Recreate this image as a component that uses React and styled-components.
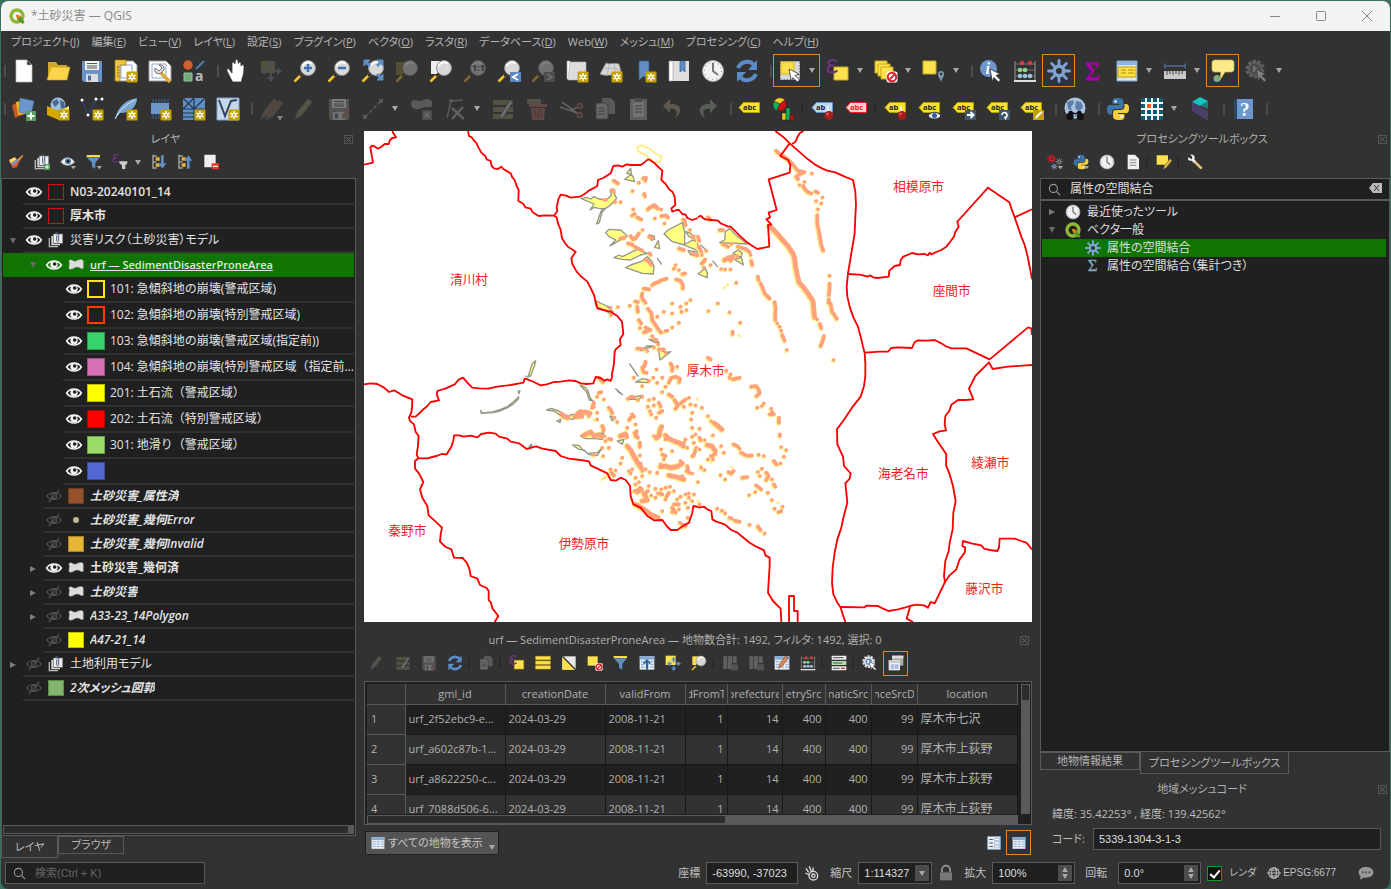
import React from "react";
import styled, { createGlobalStyle, css } from "styled-components";

const GlobalStyle = createGlobalStyle`
  * {
    box-sizing: border-box;
  }
  body {
    margin: 0;
    background: #3a6f62;
    color: #bdbdbd;
    font-family: "Open Sans", "Noto Sans CJK JP", sans-serif;
    font-size: 12px;
    line-height: 16px;
    font-feature-settings: "palt";
  }
  button, input, select {
    font: inherit;
    color: inherit;
    font-feature-settings: inherit;
  }
`;

/* ---------- icons ---------- */

const Star = () => (
  <g>
    <rect x="12.5" y="12.5" width="11" height="11" rx="1" fill="#c4a000" />
    <path d="M18 14v8M14.5 16l7 4M21.500 16l-7 4" stroke="#fff" strokeWidth="1.5" />
    <circle cx="18" cy="18" r="1" fill="#c4a000" />
  </g>
);
const Tag = ({ fill = "#f7e32c", line = "#b59d00", ink = "#222", word = "abc" }) => (
  <g>
    <path d="M1 10.500L5.500 5.500H21.500V15.500H5.500Z" fill={fill} stroke={line} />
    <text x="5" y="13" fontSize="7.500" fontWeight="700" fill={ink} fontFamily="Open Sans, sans-serif">
      {word}
    </text>
  </g>
);
const Glass = ({ sign }) => (
  <g>
    <path d="M1.500 22.500L9 15" stroke="#f4c430" strokeWidth="2.500" />
    <path d="M7 17l3-3" stroke="#222" strokeWidth="2" />
    <circle cx="15" cy="9" r="7.500" fill="#d9d9d9" stroke="#8d8d8d" />
    <path d="M9.500 7a6 6 0 0 1 9-2.500" stroke="#fff" strokeWidth="2" fill="none" />
    {sign ? <path d={sign} stroke="#3f71b0" strokeWidth="2.500" /> : null}
  </g>
);
const Cursor = () => (
  <path d="M11 10l10 5-4 1.500 4.500 4.500-2 2-4.500-4.500-1.500 4z" fill="#fff" stroke="#333" strokeWidth=".8" />
);
const Clock = () => (
  <g>
    <circle cx="12" cy="12" r="10.500" fill="#f2f2f2" stroke="#aaa" />
    <circle cx="12" cy="12" r="8.500" fill="none" stroke="#5b8cc0" strokeDasharray="1 3.450" />
    <path d="M12 4v8l5 4" stroke="#777" strokeWidth="2" fill="none" />
  </g>
);
const Pin = () => (
  <g>
    <path d="M17 9v8" stroke="#eee" strokeWidth="2" />
    <circle cx="18" cy="18.500" r="4.500" fill="#a51d1d" />
    <circle cx="16.500" cy="17" r="1.200" fill="#d66" />
  </g>
);
const Blocked = () => (
  <g>
    <rect x="12.500" y="12.500" width="11" height="11" rx="2" fill="#fff" />
    <circle cx="18" cy="18" r="4.200" fill="none" stroke="#d9262b" strokeWidth="2" />
    <path d="M15 21l6-6" stroke="#d9262b" strokeWidth="2" />
  </g>
);
const Epsilon = ({ color = "#6d3580" }) => (
  <path d="M11 2.500C8 0 1.500 1 2.500 4.500c.5 2 3 2 5.500 2-3 0-6.500.5-6.500 3.700 0 4 6.500 4.300 10 1.300" fill="none" stroke={color} strokeWidth="2" />
);
const Refresh = () => (
  <g fill="none" stroke="#5b8cc8" strokeWidth="4">
    <path d="M3 9c3-7 12-8 16-3" />
    <path d="M21 15c-3 7-12 8-16 3" />
    <path d="M22 1v10H13z" fill="#5b8cc8" stroke="none" />
    <path d="M2 23V13h9z" fill="#5b8cc8" stroke="none" />
  </g>
);
const Gear = ({ color = "#7da3d8", hole = "#323232" }) => (
  <g>
    <path
      d="M12 1.500v21M1.500 12h21M4.600 4.600l14.800 14.800M19.400 4.600L4.600 19.400"
      stroke={color}
      strokeWidth="2.800"
      strokeLinecap="round"
    />
    <circle cx="12" cy="12" r="6.500" fill={color} />
    <circle cx="12" cy="12" r="3" fill={hole} />
  </g>
);
const Python = () => (
  <g>
    <path d="M12 1c-5 0-5.500 1.500-5.500 4v2H13v1H4C1.500 8 1 10 1 13s1 4.500 3 4.500h2V15c0-2 1.500-3 3.500-3h5c2 0 3-1 3-3V5c0-3-2-4-5.500-4z" fill="#3d74a8" />
    <path d="M13 23c5 0 5.500-1.500 5.500-4v-2H12v-1h8c2.500 0 3-2 3-5s-1-4-3-4h-1.500v2.500c0 2-1.500 3.500-3.500 3.500h-5c-2 0-3 1-3 3V19c0 3 2 4 6 4z" fill="#f7cf3e" />
    <circle cx="9.500" cy="4.500" r="1.200" fill="#fff" />
    <circle cx="15.500" cy="19.500" r="1.200" fill="#fff" />
  </g>
);
const Qgis = () => (
  <g>
    <circle cx="12" cy="12" r="9" fill="none" stroke="#8cb838" strokeWidth="5" />
    <path d="M11 10l6 2 6.500 9.500-3 2.500L12 17z" fill="#5f9628" />
    <path d="M10 10l5.500 1L17 13l-2.500 3.500-2.500-1.500z" fill="#ee7913" />
  </g>
);
const Pencil = ({ color = "#8b8b75" }) => (
  <path d="M2 22l3-8L15 2l4 3L9 18z" fill={color} stroke="#666" />
);
const Magic = () => (
  <g>
    <path d="M2 3h20v5H2zM2 10h20v5H2zM2 17h20v5H2z" fill="#8c875f" />
    <path d="M8 20L19 3l3 2-10 16z" fill="#ccc" stroke="#444" strokeWidth=".8" />
  </g>
);
const Floppy = ({ body = "#6b93c7" }) => (
  <g>
    <path d="M2 2h20v21H4l-2-2z" fill={body} />
    <path d="M5 2h14v9H5z" fill="#f3f3f3" />
    <path d="M7 4.500h10M7 7h10M7 9h10" stroke="#555" />
    <path d="M6 15h12v8H6z" fill="#ddd" />
    <path d="M8 16.500h3v5H8z" fill="#4b6ea0" />
  </g>
);
const Calc = () => (
  <g>
    <path d="M2 2v20M22 2v20" stroke="#777" strokeWidth="1.500" />
    <path d="M2 5h20M2 11h20M2 17h20" stroke="#777" />
    <path d="M1 22h22" stroke="#ddd" strokeWidth="2" />
    <g fill="#d43c3c"><circle cx="9" cy="4" r="2.300" /><circle cx="17" cy="4" r="2.300" /></g>
    <g fill="#8ed08e"><circle cx="7" cy="11" r="2.300" /><circle cx="12" cy="11" r="2.300" /></g>
    <g fill="#9fc2dc"><circle cx="7" cy="17" r="2.300" /><circle cx="12" cy="17" r="2.300" /><circle cx="17" cy="17" r="2.300" /></g>
  </g>
);
const Globe = () => (
  <g>
    <circle cx="12" cy="11" r="10.500" fill="#a9c4e0" />
    <path d="M4 5l6-2 1 3-3 4 1 4-4-2zM13 4l5 1 2 5-4 5-4-4zM9 15l5 1-1 4z" fill="#5f7fa8" />
  </g>
);
const Funnel = () => (
  <g>
    <path d="M1 5h20l-7 8v9l-5-3v-6z" fill="#5f8ec5" />
    <path d="M1 3h20" stroke="#f6df3a" strokeWidth="3" />
  </g>
);
const Sheet = () => (
  <g>
    <path d="M1 2h22v20H1z" fill="#e7edf4" />
    <path d="M1 2h22v5H1z" fill="#86add6" />
    <path d="M3 10h5M10 10h5M17 10h5M3 14h5M10 14h5M17 14h5M3 18h5M10 18h5M17 18h5" stroke="#87a6c8" strokeWidth="1.500" />
  </g>
);
const Corner = () => <path d="M16 18h8l-4 5z" fill="#a8a8a8" />;

const drawings = {
  qgis: <Qgis />,
  newFile: <path d="M4 1h11l5 5v17H4zM15 1v5h5" fill="#fff" stroke="#bbb" strokeWidth=".7" />,
  open: (
    <g>
      <path d="M2 3h8l2 3h9v15H2z" fill="#d3a92a" />
      <path d="M5 8h19l-3 13H1z" fill="#fbd44c" stroke="#c79b1c" strokeWidth=".6" />
    </g>
  ),
  save: <Floppy />,
  layoutNew: (
    <g>
      <path d="M2 2h17l4 4v16H2z" fill="#fff" stroke="#999" />
      <path d="M7 6h11v13H7z" fill="none" stroke="#8ba6d8" />
      <path d="M1 1h11v5H6v16H1z" fill="#f0c63f" stroke="#9b7a12" strokeWidth=".7" />
      <path d="M3 8h2M3 11h2M3 14h2M3 17h2" stroke="#7b5f0b" />
      <Star />
    </g>
  ),
  layouts: (
    <g>
      <path d="M1 2h17l5 5v15H1z" fill="#fff" stroke="#999" />
      <path d="M4 5h14v14H4z" fill="none" stroke="#8ba6d8" />
      <path d="M13 14l9 9" stroke="#d9ab3c" strokeWidth="3.500" />
      <path d="M7 9a4 4 0 0 0 6 5l3-3a4 4 0 0 0-5-5l3 3-3 3z" fill="#ddd" stroke="#555" strokeWidth=".8" />
    </g>
  ),
  style: (
    <g>
      <circle cx="6" cy="6" r="4.700" fill="#d2602f" />
      <path d="M14 10l8-8" stroke="#4f7db8" strokeWidth="2" />
      <path d="M2 14h8v8H2z" fill="#74a877" stroke="#95c498" />
      <text x="13" y="22" fontSize="14" fontWeight="700" fill="#bbb" fontFamily="Open Sans, sans-serif">a</text>
    </g>
  ),
  hand: (
    <path
      d="M7 22l-4-8c-2-4-1-5 1-4l3 4V5c0-2.500 2.500-2.500 2.800 0l.5-3c.5-2 2.500-2 2.700 0l.3 2.500c.7-2 2.700-2 2.700.5v2c.8-1.800 2.900-1.500 3 .5 0 5-.5 9-2 12l-.5 3.500H8z"
      fill="#fff"
      stroke="#333"
      strokeWidth=".8"
    />
  ),
  panSel: (
    <g fill="#6d7f96">
      <path d="M2 2h14v12H2z" fill="#8c8456" />
      <path d="M12 1l4 5H8zM12 23l4-5H8zM1 12l5-4v8zM23 12l-5-4v8z" />
      <path d="M12 6v4M12 14v4M6 12h4M14 12h4" stroke="#6d7f96" strokeWidth="2" />
    </g>
  ),
  zoomIn: <Glass sign="M15 5v8M11 9h8" />,
  zoomOut: <Glass sign="M11 9h8" />,
  zoomFull: (
    <g>
      <Glass />
      <path d="M3 1h6L3 7zM22 1v6l-6-6zM22 21v-6l-6 6z" fill="#5f8ec5" stroke="#5f8ec5" />
      <path d="M4 2l5 5M21 2l-5 5M21 20l-5-5" stroke="#5f8ec5" strokeWidth="3" />
    </g>
  ),
  zoomSel: (
    <g>
      <path d="M1 3h12v13H1z" fill="#8b7d3c" />
      <Glass />
    </g>
  ),
  zoomLayer: (
    <g>
      <path d="M2 2h12v13H2z" fill="#eee" />
      <Glass />
    </g>
  ),
  zoomNative: (
    <g>
      <Glass />
      <text x="9" y="12" fontSize="9" fontWeight="700" fill="#333" fontFamily="Open Sans, sans-serif">1:1</text>
    </g>
  ),
  zoomLast: (
    <g>
      <Glass />
      <path d="M13 13h11v10H13z" fill="#5b8cc8" />
      <path d="M21 15l-5 3 5 3" stroke="#fff" strokeWidth="2" fill="none" />
    </g>
  ),
  zoomNext: (
    <g>
      <Glass />
      <path d="M13 13h11v10H13z" fill="#777" />
      <path d="M16 15l5 3-5 3" stroke="#ccc" strokeWidth="2" fill="none" />
    </g>
  ),
  mapNew: (
    <g>
      <path d="M2 2h3v18H2z" fill="#fff" stroke="#aaa" strokeWidth=".6" />
      <path d="M5 3h16v18H3z" fill="#dcdcdc" stroke="#bbb" strokeWidth=".6" />
      <Star />
    </g>
  ),
  map3d: (
    <g>
      <path d="M7 4c5 2 8-1 13 1l3 11c-6-3-14 3-22-1z" fill="#d5d5d5" stroke="#888" strokeWidth=".7" />
      <path d="M4 9c6 2 11-1 17 2M10 5L8 17M15 5l2 12" stroke="#aaa" strokeWidth=".7" fill="none" />
      <Star />
    </g>
  ),
  bookmarkNew: (
    <g>
      <path d="M6 2h10v19l-5-4-5 4z" fill="#5f8ec5" stroke="#35608f" strokeWidth=".7" />
      <Star />
    </g>
  ),
  bookmarks: (
    <g>
      <path d="M2 2h20v20H2z" fill="#dedede" />
      <path d="M2 2h4v20H2z" fill="#fff" stroke="#999" strokeWidth=".6" />
      <path d="M13 2h5v11l-2.500-2-2.500 2z" fill="#5f8ec5" stroke="#35608f" strokeWidth=".7" />
    </g>
  ),
  clock: <Clock />,
  refresh: <Refresh />,
  select: (
    <g>
      <path d="M2 2h20v19H2z" fill="#d8d8d8" stroke="#222" strokeDasharray="1.500 1.500" />
      <path d="M3 3h13v12H3z" fill="#fbe04a" stroke="#d5b31b" />
      <Cursor />
    </g>
  ),
  selectExpr: (
    <g>
      <path d="M8 8h14v13H8z" fill="#fce24d" stroke="#c9a91d" />
      <Epsilon />
    </g>
  ),
  deselect: (
    <g fill="#fce24d" stroke="#c9a91d">
      <path d="M1 2h12v12H1z" />
      <path d="M4 5h12v12H4z" />
      <path d="M7 8h12v12H7z" />
      <g stroke="none"><Blocked /></g>
    </g>
  ),
  selectLoc: (
    <g>
      <path d="M1 2h13v13H1z" fill="#fce24d" stroke="#c9a91d" />
      <path d="M19 23c-1-4-3-5-3-8a3 3 0 0 1 6 0c0 3-2 4-3 8z" fill="#7898b0" />
      <circle cx="19" cy="15" r="1.300" fill="#333" />
    </g>
  ),
  identify: (
    <g>
      <circle cx="9.500" cy="9.500" r="8.500" fill="#6d97cc" />
      <text x="6.500" y="15" fontSize="16" fontStyle="italic" fontWeight="700" fill="#fff" fontFamily="Liberation Serif, serif">i</text>
      <Cursor />
    </g>
  ),
  calc: <Calc />,
  gear: <Gear />,
  sigma: <text x="4" y="21" fontSize="26" fill="#a800a8" stroke="#a800a8" strokeWidth=".8" fontFamily="Liberation Serif, serif">Σ</text>,
  smallSigma: <text x="4" y="20" fontSize="25" fill="#86a7bd" stroke="#86a7bd" strokeWidth=".5" fontFamily="Liberation Serif, serif">Σ</text>,
  attrTable: (
    <g>
      <path d="M2 2h20v20H2z" fill="#dbe6f1" stroke="#7ba3cf" />
      <path d="M2 2h20v4H2z" fill="#8db3dc" />
      <path d="M3 8h18v10H3z" fill="#fbe04a" stroke="#c9a000" />
      <path d="M6 11h5M13 11h6M6 14h5M13 14h6" stroke="#b28f00" />
    </g>
  ),
  measure: (
    <g>
      <path d="M2 7h20M2 4.500v5M22 4.500v5" stroke="#4d6d8f" strokeWidth="1.500" />
      <path d="M1 12h22v8H1z" fill="#c9c9c9" />
      <path d="M4 12v4M7 12v3M10 12v4M13 12v3M16 12v4M19 12v3" stroke="#444" />
    </g>
  ),
  tips: (
    <g>
      <path d="M4 1h16c2 0 3 1 3 3v6c0 2-1 3-3 3h-6l-5 8 1-8H4c-2 0-3-1-3-3V4c0-2 1-3 3-3z" fill="#fbe98a" stroke="#d8bb3a" strokeWidth=".7" />
      <circle cx="6" cy="19.500" r="3.500" fill="#7fae7c" />
    </g>
  ),
  action: (
    <g>
      <circle cx="10" cy="10" r="8" fill="none" stroke="#aaa" strokeWidth="3" strokeDasharray="3.300 1.700" />
      <circle cx="10" cy="10" r="6.500" fill="#777" stroke="#aaa" strokeWidth="1.500" />
      <path d="M8 6.500l5.500 3.500L8 13.500z" fill="#ddd" />
      <Cursor />
    </g>
  ),

  addLayer: (
    <g>
      <path d="M0 8l9-4 3 13-9 4z" fill="#c35a1e" />
      <path d="M4 5l9-2 1 14-8 1z" fill="#f0b71c" />
      <path d="M8 1l14 3-3 14-12-3z" fill="#6b97cd" stroke="#47719f" strokeWidth=".6" />
      <path d="M14 14h10v10H14z" fill="#5b9c63" />
      <path d="M19 15.500v7M15.500 19h7" stroke="#fff" strokeWidth="2" />
    </g>
  ),
  geopackage: (
    <g>
      <circle cx="12" cy="8" r="7.500" fill="#9dbfe0" />
      <path d="M6 5l5-3 2 4-4 4zM14 3l4 2 1 6-4 1z" fill="#47688f" />
      <path d="M1 9l12 5v9L1 18z" fill="#d5a900" />
      <path d="M13 14l10-5v9l-10 5z" fill="#fbe96b" />
      <Star />
    </g>
  ),
  shape: (
    <g>
      <path d="M2 3l6 15L16 3l6-1" fill="none" stroke="#2d4460" strokeWidth="1.500" />
      <g fill="#fff"><circle cx="2" cy="3" r="1.500" /><circle cx="8" cy="18" r="1.500" /><circle cx="16" cy="2" r="1.500" /><circle cx="22" cy="2" r="1.500" /></g>
      <Star />
    </g>
  ),
  spatialite: (
    <g>
      <path d="M1 22C4 9 12 3 23 1c0 8-6 15-17 15" fill="#79a5d4" />
      <path d="M1 22C6 12 14 6 21 3" stroke="#dbe8f5" fill="none" />
      <Star />
    </g>
  ),
  memory: (
    <g>
      <path d="M5 2v20M8 2v20M11 2v20M14 2v20M17 2v20M20 2v20" stroke="#3f6490" />
      <path d="M3 6h18v11H3z" fill="#6b97cd" />
      <Star />
    </g>
  ),
  mesh: (
    <g>
      <path d="M1 1h22v22H1z" fill="#5f8ec5" />
      <path d="M12 1v22M1 12h22M1 1l11 11M12 1L1 12M12 12L23 1M1 16h11M1 20h11" stroke="#1f3550" strokeWidth="1.200" />
      <Star />
    </g>
  ),
  virtual: (
    <g>
      <path d="M1 1h22v22H1z" fill="#c7d8ea" stroke="#7fa4cd" />
      <path d="M3 3l6 16L15 4l6-1" fill="none" stroke="#2d4460" strokeWidth="2" />
      <Star />
    </g>
  ),
  pencils: (
    <g>
      <Pencil color="#8a6a5c" />
      <g transform="translate(5 1)"><Pencil color="#8a6a5c" /></g>
      <path d="M18 19h6l-3 5z" fill="#fff" />
    </g>
  ),
  pencil: <Pencil />,
  saveEdits: (
    <g>
      <Floppy body="#8a8a8a" />
      <path d="M14 20l6-9 3 2-6 9z" fill="#a08070" />
    </g>
  ),
  line: (
    <g>
      <path d="M4 20L20 4" stroke="#999" strokeWidth="1.500" strokeDasharray="4 2" />
      <path d="M2 18h4v4H2zM18 2h4v4h-4z" fill="#999" />
    </g>
  ),
  polygonAdd: (
    <g>
      <path d="M2 5c4-5 7 1 12-2 6-3 11 1 9 6-2 3-7 0-10 2-5 3-12 1-11-6z" fill="#999" />
      <path d="M13 13h10v10H13z" fill="#777" />
      <path d="M18 14v8M14 18h8M15 15l6 6M21 15l-6 6" stroke="#ccc" />
    </g>
  ),
  vertex: (
    <g>
      <path d="M4 21L8 4l12-1" fill="none" stroke="#999" strokeWidth="1.500" />
      <circle cx="8" cy="4" r="2" fill="#999" />
      <path d="M9 11l12 11M20 10L9 22" stroke="#aaa" strokeWidth="2.500" />
    </g>
  ),
  magic: <Magic />,
  trash: (
    <g>
      <path d="M2 2h14v5H2z" fill="#8c875f" />
      <path d="M4 7h18v3H4zM6 11h14l-1 12H7z" fill="#b06a64" />
      <path d="M10 12v9M13 12v9M16 12v9" stroke="#444" />
    </g>
  ),
  cut: (
    <g fill="none" stroke="#aaa" strokeWidth="1.800">
      <path d="M1 10l17 6M3 5l14 10M11 13l8-3" />
      <circle cx="20.500" cy="18" r="2.300" stroke="#a66" />
      <circle cx="21" cy="9" r="2.300" stroke="#a66" />
    </g>
  ),
  copy: (
    <g>
      <path d="M9 1h9l4 4v12H9z" fill="#999" />
      <path d="M3 6h9l3 3v13H3z" fill="#c4c4c4" stroke="#555" />
      <path d="M5 11h7M5 14h7M5 17h7" stroke="#555" />
    </g>
  ),
  paste: (
    <g>
      <path d="M3 2h17v21H3z" fill="#aaa" />
      <path d="M6 5h11v15H6z" fill="#ddd" />
      <path d="M8 1h7v4H8z" fill="#777" />
      <path d="M8 9h7M8 12h7M8 15h7" stroke="#555" />
    </g>
  ),
  undo: <path d="M9 2L2 9l7 7v-4c7-1 8 3 5 9 8-5 7-15-5-14z" fill="#a9917a" />,
  redo: <path d="M15 2l7 7-7 7v-4c-7-1-8 3-5 9-8-5-7-15 5-14z" fill="#93a392" />,
  label: <Tag />,
  labelRed: <Tag fill="#ffd0d0" line="#f02020" ink="#f02020" />,
  labelPinBlue: <g><Tag fill="#bcd9f5" line="#5f95d0" word="ab" /><Pin /></g>,
  labelPin: <g><Tag word="ab" /><Pin /></g>,
  labelEye: (
    <g>
      <Tag />
      <path d="M10 19c3-5 10-5 13 0-3 4-10 4-13 0z" fill="#eee" stroke="#333" />
      <circle cx="16.500" cy="18.500" r="2.500" fill="#2b5f9e" />
    </g>
  ),
  labelMove: (
    <g><Tag /><path d="M13 13h11v10H13z" fill="#40586c" /><path d="M15 18h6M18.500 15l3 3-3 3" stroke="#fff" strokeWidth="2" fill="none" /></g>
  ),
  labelRotate: (
    <g><Tag /><path d="M13 13h11v10H13z" fill="#40586c" /><path d="M16 18a2.500 2.500 0 1 1 3 2.500l1 2" stroke="#fff" strokeWidth="1.500" fill="none" /></g>
  ),
  labelEdit: (
    <g><Tag /><path d="M13 13h11v10H13z" fill="#c4a000" /><path d="M15 22l1-3 5-5 1.500 1.500-5 5z" fill="#fff" /></g>
  ),
  chart: (
    <g stroke="#222" strokeWidth=".5">
      <path d="M8 7L5 14A7 7 0 0 1 2 4z" fill="#0fb05a" />
      <path d="M8 7L2 4a7 7 0 0 1 11-1z" fill="#f5d020" />
      <path d="M8 7l5-4c3 4 1 10-5 11l-3-1z" fill="#d01010" />
      <path d="M10 16h4v7h-4z" fill="#f5c518" />
      <path d="M14 11h4v12h-4z" fill="#10b060" />
      <path d="M18 18h4v5h-4z" fill="#c01010" />
    </g>
  ),
  metasearch: (
    <g>
      <Globe />
      <path d="M6 14h3l2 2h2l2-2h3l1 3H5z" fill="#111" />
      <circle cx="7" cy="19.500" r="3.700" fill="#111" />
      <circle cx="17.500" cy="19.500" r="3.700" fill="#111" />
    </g>
  ),
  python: <Python />,
  grid: (
    <g>
      <path d="M1 1h22v22H1z" fill="#0b5c74" />
      <path d="M6 1v22M12 1v22M18 1v22M1 6h22M1 12h22M1 18h22" stroke="#fff" strokeWidth="2" />
      <path d="M7 7h4v4H7z" fill="#ff5a1f" />
    </g>
  ),
  cube: (
    <g>
      <path d="M4 5l8-5 8 4-8 5z" fill="#16c5c0" />
      <path d="M4 5l16 9v10L4 14z" fill="#4c3e66" />
      <path d="M4 5l8 4 8-5v8z" fill="#12a09d" opacity=".7" />
    </g>
  ),
  help: (
    <g>
      <path d="M3 2h19v20H3z" fill="#6b97cd" />
      <path d="M3 2h3v20H3z" fill="#2c4666" />
      <text x="9" y="19" fontSize="19" fontWeight="700" fill="#fff" fontFamily="Liberation Serif, serif">?</text>
    </g>
  ),

  brush: (
    <g>
      <path d="M13 9L22 1l1 2-7 9z" fill="#d9903c" />
      <path d="M1 9l9-4 7 7-4 8-6 1z" fill="#d55b3c" />
      <path d="M2 9l8-4 3 3-9 6z" fill="#f5df5a" />
      <path d="M5 14l8-6 2 3-8 6z" fill="#6c9bd2" />
    </g>
  ),
  group: (
    <g>
      <path d="M1 9h2v12h12v2H1z" fill="#bbb" />
      <path d="M5 6h3v12h10v2H5z" fill="#ddd" />
      <path d="M8 3h14v14H8z" fill="#eee" stroke="#777" />
      <path d="M13 5v8c0 2 3 2 3 0V3c0-3-5-3-5 0" stroke="#45607d" fill="none" strokeWidth="1.500" />
    </g>
  ),
  groupAdd: (
    <g>
      <path d="M1 9h2v12h12v2H1z" fill="#bbb" />
      <path d="M5 6h3v12h10v2H5z" fill="#ddd" />
      <path d="M8 3h14v14H8z" fill="#eee" stroke="#777" />
      <path d="M13 5v8c0 2 3 2 3 0V3c0-3-5-3-5 0" stroke="#45607d" fill="none" strokeWidth="1.500" />
      <path d="M15 15h9v9h-9z" fill="#5b9c63" />
      <path d="M19.500 16.500v6M16.500 19.500h6" stroke="#fff" strokeWidth="1.500" />
    </g>
  ),
  eyeMenu: (
    <g>
      <path d="M1 12C6 3 17 3 22 12c-5 7-16 7-21 0z" fill="#eee" stroke="#777" />
      <circle cx="12" cy="11" r="4.500" fill="#5884b5" />
      <circle cx="12" cy="11" r="2" fill="#111" />
      <Corner />
    </g>
  ),
  funnel: <Funnel />,
  funnelMenu: <g><Funnel /><Corner /></g>,
  exprFilter: (
    <g>
      <g transform="scale(.9)"><Epsilon color="#6d3580" /></g>
      <path d="M11 11h12v3l-3 3v6l-5-1v-5l-4-3z" fill="#ccc" />
    </g>
  ),
  expand: (
    <g>
      <path d="M3 1v21M3 3h6M3 12h5M3 21h6" stroke="#ccc" fill="none" strokeWidth="1.500" />
      <path d="M7 5h6v5H7zM7 14h6v5H7z" fill="#e5b33a" />
      <path d="M17 2v14" stroke="#5f8ec5" strokeWidth="4" />
      <path d="M11 14h12l-6 8z" fill="#5f8ec5" />
    </g>
  ),
  collapse: (
    <g>
      <path d="M3 1v21M3 3h6M3 12h5M3 21h6" stroke="#ccc" fill="none" strokeWidth="1.500" />
      <path d="M7 5h6v5H7zM7 14h6v5H7z" fill="#e5b33a" />
      <path d="M17 22V8" stroke="#5f8ec5" strokeWidth="4" />
      <path d="M11 10h12l-6-8z" fill="#5f8ec5" />
    </g>
  ),
  remove: (
    <g>
      <path d="M2 1h17v19H2z" fill="#eee" />
      <path d="M13 14h11v9H13z" fill="#e33" />
      <path d="M15 18.500h7" stroke="#fff" strokeWidth="2" />
    </g>
  ),
  gears: (
    <g>
      <g transform="scale(.58)"><Gear color="#d21f2b" hole="#611" /></g>
      <g transform="translate(13 6) scale(.45)"><Gear color="#888" /></g>
      <g transform="translate(6 14) scale(.4)"><Gear color="#7da3d8" /></g>
      <Corner />
    </g>
  ),
  pythonMenu: <g><Python /><Corner /></g>,
  doc: (
    <g>
      <path d="M4 1h11l6 6v16H4z" fill="#f0f0f0" />
      <path d="M7 9h10M7 13h10M7 17h10" stroke="#888" strokeWidth="1.500" />
    </g>
  ),
  note: (
    <g>
      <path d="M1 2h17v14H1z" fill="#fce24d" />
      <path d="M11 23l2-6L21 7l3 3-9 11z" fill="#e0b93c" stroke="#555" strokeWidth=".7" />
    </g>
  ),
  wrench: (
    <g>
      <path d="M11 11l11 11" stroke="#e8c878" strokeWidth="4" />
      <path d="M2 5l5 3 1-4-3-3c5-1 8 3 6 7l2 3-3 2-3-3c-4 1-7-2-5-5z" fill="#eee" />
    </g>
  ),
  conditional: (
    <g>
      <path d="M2 2h20v20H2z" fill="#e8e8e8" />
      <path d="M2 2v20h20z" fill="#fce24d" />
      <path d="M2 2l20 20" stroke="#333" strokeWidth="2" />
    </g>
  ),
  selectAll: <path d="M1 2h22v5H1zM1 9h22v5H1zM1 16h22v5H1z" fill="#fce24d" stroke="#d0ae1a" />,
  selectNone: (
    <g>
      <path d="M1 2h15v14H1z" fill="#fce24d" />
      <Blocked />
    </g>
  ),
  moveTop: (
    <g>
      <Sheet />
      <path d="M12 22V10M7 13l5-5 5 5" stroke="#2d64a8" strokeWidth="3" fill="none" />
    </g>
  ),
  panMap: (
    <g>
      <path d="M1 1h15v14H1z" fill="#fce24d" />
      <path d="M13 6v5M13 16v5M6 13h4M16 13h5" stroke="#5f8ec5" strokeWidth="2.500" />
      <path d="M13 3l4 5H9zM13 24l4-5H9zM3 13l5-4v8zM24 13l-5-4v8z" fill="#5f8ec5" />
    </g>
  ),
  zoomMap: (
    <g>
      <path d="M2 2h12v13H2z" fill="#fce24d" />
      <Glass />
    </g>
  ),
  fieldAdd: (
    <g>
      <path d="M2 2h6v19H2zM9 2h6v19H9zM16 2h6v10h-6z" fill="#aaa" />
      <path d="M14 14h10v9H14z" fill="#888" />
    </g>
  ),
  editTable: (
    <g>
      <Sheet />
      <path d="M7 20l2-7L17 2l4 2-8 12z" fill="#e08a4a" stroke="#843" />
    </g>
  ),
  formView: (
    <g>
      <path d="M1 1h22v6H1zM1 17h22v6H1z" fill="#eee" />
      <path d="M1 9h22v6H1z" fill="#b9d8b6" />
      <path d="M3 12h14" stroke="#3b8f4a" strokeWidth="2" />
      <path d="M3 4h16M3 20h10" stroke="#555" strokeWidth="1.500" />
      <path d="M15 19h6v2h-6z" fill="#d33" />
    </g>
  ),
  actionBlue: (
    <g>
      <circle cx="10" cy="10" r="8" fill="none" stroke="#e4e4e4" strokeWidth="3" strokeDasharray="3.300 1.700" />
      <circle cx="10" cy="10" r="6" fill="#5b8cc8" stroke="#e4e4e4" strokeWidth="2.500" />
      <path d="M8 7l5 3-5 3z" fill="#fff" />
      <Cursor />
    </g>
  ),
  dock: (
    <g>
      <path d="M6 1h17v15H6z" fill="#aaa" />
      <path d="M6 1h17v4H6z" fill="#ddd" />
      <path d="M1 8h17v15H1z" fill="#eee" />
      <path d="M1 8h17v4H1z" fill="#ccc" />
      <path d="M4 14h5v7H4zM10 14h6v7h-6z" fill="#a5c0de" />
    </g>
  ),
  sheet: <Sheet />,
  form: (
    <g>
      <path d="M1 1h22v22H1z" fill="#e9eef5" stroke="#8fadd0" />
      <path d="M4 6h6M4 12h6M4 18h6" stroke="#555" strokeWidth="2" />
      <path d="M13 4h8v4h-8zM13 10h8v4h-8zM13 16h8v4h-8z" fill="#fff" stroke="#7898c0" />
    </g>
  ),
  search: (
    <g fill="none" stroke="#9a9a9a" strokeWidth="2">
      <circle cx="10" cy="10" r="7.500" />
      <path d="M15.500 15.500l7 7" />
    </g>
  ),
  eye: (
    <g>
      <path d="M1 12C6 4 18 4 23 12c-5 8-17 8-22 0z" fill="none" stroke="#f2f2f2" strokeWidth="2.500" />
      <circle cx="12" cy="11.500" r="5.500" fill="#f2f2f2" />
      <circle cx="13" cy="10.500" r="2.700" fill="#222" />
    </g>
  ),
  eyeOff: (
    <g fill="none" stroke="#505050" strokeWidth="1.800">
      <path d="M1 12C6 5 18 5 23 12c-5 7-17 7-22 0z" />
      <circle cx="12" cy="12" r="4" />
      <path d="M4 21L20 3" />
    </g>
  ),
  polygon: <path d="M1 6c5-5 6 2 11 0 6-3 10-3 11 0v11c-4 2-5-2-9-2-5 0-8 5-12 3-2-3 2-8-1-12z" fill="#dcdcdc" stroke="#999" strokeWidth=".6" />,
  globe: (
    <g fill="none" stroke="#bbb" strokeWidth="1.800">
      <circle cx="12" cy="12" r="9" />
      <ellipse cx="12" cy="12" rx="4" ry="9" />
      <path d="M0 12h24M4 7h16M4 17h16" />
    </g>
  ),
  bubble: (
    <g>
      <path d="M12 3c6 0 11 3 11 8s-5 8-11 8c-1 0-2 0-3-.3L3 22l1-5c-2-1-3-3-3-6 0-5 5-8 11-8z" fill="#999" />
      <path d="M6 11h2M11 11h2M16 11h2" stroke="#333" strokeWidth="2.500" />
    </g>
  ),
  lock: (
    <g>
      <path d="M6 11V7a6 6 0 0 1 12 0v4" fill="none" stroke="#999" strokeWidth="2.500" />
      <path d="M3 11h18v12H3z" fill="#777" />
    </g>
  ),
  track: (
    <g fill="none" stroke="#ddd" strokeWidth="2">
      <path d="M3 5l4 6M8 2l3 8M14 4l-1 6M2 12l6 3" />
      <circle cx="14" cy="16" r="6.500" />
      <circle cx="14" cy="16" r="2.500" />
    </g>
  ),
};

const Svg = styled.svg`
  display: block;
  flex: none;
  width: ${p => p.$size}px;
  height: ${p => p.$size}px;
  overflow: visible;
  opacity: ${p => (p.$dim ? 0.38 : 1)};
`;
const Icon = ({ name, size = 16, dim }) => (
  <Svg viewBox="0 0 24 24" $size={size} $dim={dim} aria-hidden="true">
    {drawings[name]}
  </Svg>
);

/* ---------- window ---------- */

const Window = styled.div`
  display: flex;
  flex-direction: column;
  min-height: 100vh;
  border: 1px solid #3a6f62;
  border-bottom: 0;
  border-radius: 8px;
  overflow: hidden;
  background: #323232;
`;
const TitleBar = styled.header`
  display: flex;
  align-items: center;
  gap: 6px;
  height: 30px;
  padding-left: 8px;
  background: #f3f3f3;
  color: #8a8a8a;
`;
const WindowTitle = styled.h1`
  flex: 1;
  margin: 0;
  font-size: 12px;
  font-weight: 400;
`;
const WindowButtons = styled.div`
  display: flex;
`;
const WindowButton = styled.button`
  display: grid;
  place-items: center;
  width: 46px;
  height: 30px;
  padding: 0;
  border: 0;
  background: none;
`;
const MenuBar = styled.nav`
  display: flex;
  align-items: center;
  gap: 12px;
  height: 23px;
  padding: 0 0 2px 10px;
`;
const MenuButton = styled.button`
  padding: 0;
  border: 0;
  background: none;
  white-space: nowrap;
  font-size: 11px;
  color: #b4b4b4;
`;
const Bar = styled.div`
  display: flex;
  align-items: center;
  gap: 1px;
  height: ${p => (p.$small ? 26 : 33)}px;
  margin-bottom: ${p => p.$after || 0}px;
  margin-left: ${p => (p.$small ? p.$inset || 0 : -3)}px;
`;
const ToolButton = styled.button`
  display: flex;
  flex: none;
  align-items: center;
  justify-content: center;
  gap: 7px;
  width: ${p => (p.$small ? (p.$split ? 38 : 25) : p.$split ? 47 : 33)}px;
  height: ${p => (p.$small ? 25 : 33)}px;
  padding: 0;
  border: 1px solid ${p => (p.$on ? "#e08a1e" : "transparent")};
  background: none;
`;
const Handle = styled.span`
  flex: none;
  width: 8px;
  height: 12px;
  border-right: 2px solid #4c4c4c;
`;
const Divider = styled.span`
  flex: none;
  width: 4px;
  height: 10px;
  border-left: 2px solid #292929;
`;
const Caret = styled.span`
  border: 3px solid transparent;
  border-top: 5px solid #a8a8a8;
  border-bottom: 0;
`;

// "|" is a drag handle, ":" a divider; suffixes: "v" menu arrow, "-" disabled, "*" pressed
const Tools = ({ items, small, inset, after }) => (
  <Bar $small={small} $inset={inset} $after={after} role="toolbar">
    {items.split(" ").map((item, i) => {
      if (item === "|") return <Handle key={i} />;
      if (item === ":") return <Divider key={i} />;
      const name = item.replace(/[v*-]+$/, "");
      const flags = item.slice(name.length);
      const split = flags.includes("v");
      return (
        <ToolButton
          key={i}
          aria-label={name}
          $small={small}
          $split={split}
          $on={flags.includes("*")}
          disabled={flags.includes("-")}
        >
          <Icon name={name} size={small ? 16 : 24} dim={flags.includes("-")} />
          {split && <Caret />}
        </ToolButton>
      );
    })}
  </Bar>
);

const mainTools =
  "| newFile open save layoutNew layouts style | hand panSel- zoomIn zoomOut zoomFull zoomSel- zoomLayer zoomNative- zoomLast zoomNext- mapNew map3d bookmarkNew bookmarks clock refresh | select*v selectExprv deselectv selectLocv | identify calc gear* sigma attrTablev measurev tips* action-v";
const editTools =
  "| addLayer geopackage shape spatialite memory mesh virtual | pencils- pencil- saveEdits- line-v polygonAdd- vertex-v magic- trash- cut- copy- paste- undo- redo- | label chart : labelPinBlue labelRed : labelPin labelEye labelMove labelRotate labelEdit | metasearch | python gridv cube | help |";
const tableTools =
  "pencil- magic- saveEdits- refresh : copy- : selectExpr selectAll conditional selectNone funnel moveTop panMap zoomMap : fieldAdd- fieldAdd- editTable calc : formView : actionBlue dock*";

const menus = [
  ["プロジェクト", "J"],
  ["編集", "E"],
  ["ビュー", "V"],
  ["レイヤ", "L"],
  ["設定", "S"],
  ["プラグイン", "P"],
  ["ベクタ", "O"],
  ["ラスタ", "R"],
  ["データベース", "D"],
  ["Web", "W"],
  ["メッシュ", "M"],
  ["プロセシング", "C"],
  ["ヘルプ", "H"],
];

const Workspace = styled.main`
  display: grid;
  flex: 1;
  grid-template-columns: 355px minmax(0, 1fr) 350px;
  gap: 8px;
  min-height: 0;
  margin-top: 4px;
`;
const Dock = styled.section`
  display: flex;
  flex-direction: column;
  min-width: 0;
  min-height: 0;
`;
const DockTitle = styled.div`
  display: flex;
  align-items: center;
  gap: 14px;
  height: ${p => p.$height || 20}px;
  padding: ${p => p.$top || 0}px 3px 0 0;
  color: #b0b0b0;
`;
const DockName = styled.h2`
  flex: 1;
  margin: 0;
  font-size: 11px;
  font-weight: 400;
  text-align: center;
`;
const CloseButton = styled.button`
  display: grid;
  place-items: center;
  width: 9px;
  height: 9px;
  padding: 0;
  border: 1px solid #555;
  background: none;
`;
const Title = ({ children, height, top }) => (
  <DockTitle $height={height} $top={top}>
    <DockName>{children}</DockName>
    <CloseButton aria-label="close">
      <svg width="5" height="5" viewBox="0 0 5 5">
        <path d="M0 0l5 5M5 0L0 5" stroke="#6a6a6a" />
      </svg>
    </CloseButton>
  </DockTitle>
);
const Well = styled.div`
  display: flex;
  flex: 1;
  flex-direction: column;
  padding: 2px 1px 1px;
  border: 1px solid #5a5a5a;
  background: #202020;
`;

/* ---------- layer tree ---------- */

const Row = styled.div`
  display: flex;
  align-items: center;
  height: ${p => (p.$tall ? 26 : 24)}px;
  padding-left: ${p => p.$level * 20}px;
  background: ${p => (p.$selected ? "#107500" : "none")};
`;
const Twist = styled.span`
  display: grid;
  flex: none;
  place-items: center;
  width: 20px;
  &::before {
    content: ${p => (p.$state ? '""' : "none")};
    border: 3px solid transparent;
    ${p =>
      p.$state === "open"
        ? css`
            border-top: 6px solid #6a6a6a;
            border-bottom: 0;
          `
        : css`
            border-left: 6px solid #7c7c7c;
            border-right: 0;
          `}
  }
`;
const RowBody = styled.div`
  display: flex;
  flex: 1;
  align-items: center;
  gap: ${p => (p.$tall ? 5 : 6)}px;
  min-width: 0;
  height: 100%;
  padding-left: 3px;
  border-bottom: ${p => (p.$selected ? 0 : 2)}px solid #303030;
`;
const Swatch = styled.span`
  display: grid;
  flex: none;
  place-items: center;
  width: ${p => (p.$tall ? 18 : 16)}px;
  height: ${p => (p.$tall ? 18 : 16)}px;
  border: ${p => (p.$outline ? `${p.$tall ? 2 : 1}px solid ${p.$outline}` : p.$fill ? "1px solid #0004" : "0")};
  background: ${p => p.$fill || "none"};
`;
const Dot = styled.span`
  width: 6px;
  height: 6px;
  border-radius: 50%;
  background: #c4b697;
`;
const RowText = styled.span`
  overflow: hidden;
  text-overflow: ${p => (p.$tall ? "clip" : "ellipsis")};
  white-space: nowrap;
  color: #e4e4e4;
  font-size: ${p => (p.$selected ? 11 : 12)}px;
  font-feature-settings: ${p => (p.$tall ? "normal" : '"palt"')};
  font-weight: ${p => (p.$bold ? 600 : 400)};
  font-style: ${p => (p.$off ? "italic" : "normal")};
  text-decoration: ${p => (p.$selected ? "underline" : "none")};
`;

const layers = [
  { text: "N03-20240101_14", outline: "#d01414", bold: true },
  { text: "厚木市", outline: "#d01414", bold: true },
  { text: "災害リスク（土砂災害）モデル", icon: "group", twist: "open" },
  { text: "urf — SedimentDisasterProneArea", level: 1, icon: "polygon", twist: "open", selected: true, bold: true },
  { text: "101: 急傾斜地の崩壊(警戒区域)", level: 2, outline: "#ffe600" },
  { text: "102: 急傾斜地の崩壊(特別警戒区域)", level: 2, outline: "#ff3c00" },
  { text: "103: 急傾斜地の崩壊(警戒区域(指定前))", level: 2, fill: "#38d26c" },
  { text: "104: 急傾斜地の崩壊(特別警戒区域（指定前...", level: 2, fill: "#d770b5" },
  { text: "201: 土石流（警戒区域）", level: 2, fill: "#ffff00" },
  { text: "202: 土石流（特別警戒区域）", level: 2, fill: "#ff0000" },
  { text: "301: 地滑り（警戒区域）", level: 2, fill: "#9adc68" },
  { text: "", level: 2, fill: "#5268d4" },
  { text: "土砂災害_属性済", level: 1, fill: "#95522f", bold: true, off: true },
  { text: "土砂災害_幾何Error", level: 1, dot: true, bold: true, off: true },
  { text: "土砂災害_幾何Invalid", level: 1, fill: "#e6b637", bold: true, off: true },
  { text: "土砂災害_幾何済", level: 1, icon: "polygon", twist: "shut", bold: true },
  { text: "土砂災害", level: 1, icon: "polygon", twist: "shut", bold: true, off: true },
  { text: "A33-23_14Polygon", level: 1, icon: "polygon", twist: "shut", bold: true, off: true },
  { text: "A47-21_14", level: 1, fill: "#ffff00", bold: true, off: true },
  { text: "土地利用モデル", icon: "group", twist: "shut", hidden: true },
  { text: "2次メッシュ図郭", fill: "#85b66f", bold: true, off: true },
];

const LayerRow = ({ layer }) => {
  const { text, level = 0, icon, outline, fill, dot, twist, selected, bold, off, hidden } = layer;
  const tall = level === 2;
  return (
    <Row $level={level} $tall={tall} $selected={selected}>
      <Twist $state={twist} />
      <RowBody $tall={tall} $selected={selected}>
        <Icon name={off || hidden ? "eyeOff" : "eye"} />
        {icon ? (
          <Icon name={icon} />
        ) : (
          <Swatch $tall={tall} $outline={outline} $fill={fill}>
            {dot && <Dot />}
          </Swatch>
        )}
        <RowText $tall={tall} $bold={bold} $off={off} $selected={selected}>
          {text}
        </RowText>
      </RowBody>
    </Row>
  );
};

const Scroll = styled.div`
  height: 9px;
  margin-top: auto;
  border: 1px solid #5a5a5a;
  border-right: 6px solid #5a5a5a;
  background: #2c2c2c;
`;
const Tabs = styled.div`
  display: flex;
  align-items: flex-start;
  height: ${p => p.$height}px;
`;
const Tab = styled.button`
  height: ${p => (p.$active ? 22 : 18)}px;
  padding: 0 ${p => p.$pad}px;
  border: 1px solid #5a5a5a;
  border-top-width: ${p => (p.$active ? 0 : 1)}px;
  background: #323232;
  color: #b5b5b5;
  font-size: 11px;
  line-height: 14px;
  white-space: nowrap;
`;

/* ---------- map ---------- */

const MapCanvas = styled.svg`
  display: block;
  flex: 1;
  width: 100%;
  height: 0;
  min-height: 300px;
  margin-top: 2px;
  background: #fff;
`;

// each tile: origin, borders, hazard areas, slope strips and single yellow specks
const tiles = [
  {
    x: 0,
    y: -3,
    borders: [
      "85,3 88,10 96,22 85,24 78,30 74,42 62,42 52,50 42,56 33,50 24,47 19,53 23,75 27,98 14,101 0,104",
      "312,3 315,18 323,22 330,32 338,40 342,50 352,68 364,78 368,88 380,93 383,108 390,115 402,117 412,110 418,117 425,121 440,130 445,142 452,150 458,168 464,180 463,212 478,222 484,232 500,236 506,247 524,258 545,256 570,257 580,243 578,232 583,208 590,194 606,197 620,203 648,200 665,190 674,182 682,178 700,168 702,150 718,144 740,130 748,108 762,106 775,110 788,103 800,105 830,105 840,98 852,88 858,90 870,98 880,108 895,122 892,150 905,162 915,178 925,185 932,200 934,225 922,235 925,245 938,240 945,240 955,252 965,254 970,264 985,270 1002,264",
      "570,257 578,262 582,280 590,300 594,325 605,342 614,352 635,365 622,385 625,402 638,425 650,438 670,455 683,480 690,495 700,535 718,540 740,545 760,558 774,575 778,612 768,628 770,645 755,658 752,665 750,700 743,738",
    ],
    areas: [
      "652,206 668,202 680,207 690,200 705,207 725,210 735,203 742,196 739,180 752,178 750,190 758,205 740,225 725,235 708,236 690,232 678,240 690,222",
      "725,235 715,245 710,262 706,278 698,282 705,260 712,242",
      "800,115 788,130 802,133",
      "802,133 782,148 812,155 808,142",
      "725,308 735,298 770,300 790,318 770,328 752,340 738,348 755,330 735,320",
      "900,312 912,300 955,278 962,305 962,345 925,335",
      "750,383 765,375 775,380 820,358 850,370 830,375 800,390 775,388",
      "785,413 800,405 830,395 850,380 862,392 870,408 868,432 835,430",
      "855,315 870,318 872,328 862,330",
      "883,332 872,352 887,356",
      "880,385 892,402",
      "965,305 980,310 990,325 975,320",
      "960,345 985,330 1000,335 1002,362 985,355",
      "972,362 1002,366 1002,378 980,374",
      "693,512 695,528 720,540 740,552 748,546 728,528 742,534",
      "883,655 888,690 920,665 905,668",
      "855,628 870,630 885,637 875,638",
      "830,662 848,648 868,648",
      "493,738 505,700 515,692 512,706 500,738",
      "797,702 806,715 822,738",
    ],
    strips:
      "750,152 762,160|825,158|838,145 846,143 844,152|806,183|841,192 843,198|770,216|754,216|720,210 726,210|745,180 750,186|852,238 858,232 872,225 882,235|870,230|892,238|808,238|805,256 812,252|820,262 832,268|873,265|892,258 906,256 912,262|902,280|958,268 962,272 965,285|978,300|985,318 1000,322|995,330|945,355 960,360|985,370 1000,376|800,318 808,328|815,325 825,310|836,300|793,340 806,344|812,350 835,362|768,326 782,323|857,370 860,374|856,320 865,325|845,390 855,395 862,405|935,405|930,416|945,420|955,432 964,430|838,510 833,500 835,490|840,475 855,478|865,465 872,460 885,455 892,450 908,446|937,448 950,452 957,465 957,475|798,527|814,514 822,516|820,530 822,545|825,570 832,580|845,592 860,600|845,518 835,506|852,536 862,548 865,570 875,585 885,600 892,608|880,560|900,545|925,520|950,530|967,520|980,510|968,540|925,550|953,545|905,603 910,602|925,592|945,578|828,594|840,606 850,604|865,618|870,628 878,630|883,643|820,655 838,657|850,663|870,652|885,658 900,658|905,668|845,695 842,708 835,712 838,725 848,728|878,718|920,700 926,712 925,722|940,710|740,533|762,531|742,554",
    specks: "",
  },
  {
    x: 1002,
    y: -3,
    borders: [
      "0,262 8,257 15,264 22,268 40,270 60,272 68,280 80,285 90,290 98,290 110,302 125,317 145,335 160,346 178,357 214,350 210,285 220,283 205,268 216,262 212,248 236,240 212,148 275,128 277,105 270,90 247,78 275,40 255,20 232,3",
      "316,3 305,10 298,22 292,36 282,42",
      "275,40 300,62 330,88 350,103 372,115 388,122 412,127 440,140 465,150 472,185 474,225 472,260 470,310 460,370 450,430 446,470 448,500 455,530 466,562 480,590 488,620 495,650 500,668 502,700 502,738",
      "450,432 485,434 510,440 516,436 525,442 538,444 572,440 574,422 590,408 606,405 608,390 616,380 642,369 660,373 680,372 690,376 695,368 700,373 715,366 730,360 745,350 756,336 768,320 772,306 782,290 778,275 788,264 870,173 934,217 940,235 950,262 970,320 980,345 988,375 996,415 1002,448",
      "950,262 1002,238",
      "500,668 545,665 570,665 580,654 600,652 642,654 650,636 660,631 690,632 710,630 730,640 742,648 760,655 805,655 875,688 990,592 1000,595 1002,615",
      "832,738 873,697 884,717 930,710 985,706 1002,705",
    ],
    areas: [
      "65,338 80,330 82,305 95,295 110,312 148,342",
      "105,370 120,360 133,370 128,382",
      "110,388 130,382 136,405",
      "0,432 22,414 28,430 28,443",
      "45,393 58,410",
      "8,345 22,358",
    ],
    strips:
      "215,288 235,308 250,325 270,348 285,370 290,385 293,410 297,430 303,457 315,470 330,490 345,513 350,562!|80,390 90,385 105,380 98,390!|235,62 240,68 262,82 272,90 285,103 298,120 308,124 320,126|312,130 302,134 295,140 300,147|342,130|305,165|320,156|316,168 322,178 330,186 340,190|353,184 360,188|355,213|374,202|370,220|360,238|358,255 358,280 362,300 366,320 370,345 376,362|358,568|366,582 370,594|378,618 374,634 368,648|395,437|395,460 395,475 393,495|393,508 392,518|398,520 402,545 410,555 417,566|180,440 182,450|188,460 195,475 200,490 215,505|230,516 233,535 232,550 232,570|238,580|245,590|250,602|253,615 260,632|267,660|407,690|30,262 36,268|65,300 76,300|75,342 90,350|100,342|120,350 145,358 155,366|158,375|160,392 163,405|70,417|82,418|98,418|60,520|32,543|95,547|127,578|104,605 104,612|115,458|30,683 38,688|85,722|98,733|0,320 4,332|2,350 10,365|25,362|12,375|22,388 12,400|18,395|38,405|18,412|98,390|118,378",
    specks: "80,473 88,464 123,617 34,260 84,728",
  },
  {
    x: 0,
    y: 735,
    borders: [
      "745,0 740,15 730,10 722,14 710,6 695,3 688,22 668,24 650,22 635,15 615,13 590,17 570,18 548,25 530,28 510,18 490,10 482,8 478,20 440,27 400,32 372,38 345,37 325,35 312,22 297,5 285,10 272,25 245,37 220,45 218,55 225,73 200,78 190,90 180,98 170,108 155,122 140,122",
      "0,25 20,22 40,24 60,35 75,48 90,43 115,58 145,70 144,95 142,110 135,125 138,135 150,145 155,168 164,180 162,210 158,235 163,247 153,255 153,278 165,292 178,318 168,340 175,365 190,390 194,418 215,437 234,455 230,475 228,497 245,513 262,520 270,545 296,546 308,560 316,578 320,600 340,608 348,627 368,636 374,645 374,672 381,680 385,697 403,720 392,738",
      "163,247 190,247 205,243 218,240 233,234 248,235 262,212 268,195 270,178 285,178 300,182 320,179 340,184 352,174 375,170 395,173 405,182 430,188 440,197 465,202 488,219 516,211 535,218 575,225 590,240 615,248 650,252 675,256 680,268 705,280 730,292 740,312 755,314 770,305 785,312 798,330 800,360 808,385 830,395 850,420 870,433 895,432 908,450 920,462 940,462 960,448 975,440 985,410 988,390 1002,393",
    ],
    areas: [
      "350,103 355,111 385,108 410,100 430,92 450,76 464,62 463,70 450,82 430,96 405,106 388,110 352,112",
      "462,45 468,45 465,53",
      "485,0 493,4",
      "548,102 562,97 585,105 605,118 590,118 570,105",
      "578,135 590,130 588,140",
      "648,28 664,34 672,45 680,68 688,75 676,72 668,48",
      "755,38 765,50 776,56",
      "815,18 835,8 856,12 848,20",
      "790,70 815,62 835,58 825,70",
      "600,125 625,115 650,120 625,130",
      "650,180 670,170 700,175 718,170 715,190 690,188 665,188",
      "625,207 645,208 655,220 670,232 700,230 715,215 700,238 675,236 660,222 645,220",
      "760,195 780,190 775,205",
      "738,120 750,125 745,135",
      "496,212 502,204 504,212",
    ],
    strips:
      "893,152 888,165 885,180 878,186!|905,178 915,188 930,195 945,200 958,210!|890,272 905,270 920,275 940,272 955,262!|915,298 935,302 960,310!|790,210 800,222 810,240 820,258 832,275!|770,180 785,174 788,182!|660,178 680,168 690,180 705,176 712,182!|815,385 840,400 860,415 882,425!|840,352 850,372 835,375!|598,120 612,124!|640,118 660,108 676,112!|820,345 832,340!|592,112|600,122 610,126|630,122 655,122|640,112 650,105|665,108 680,112|675,120|685,95 690,80|700,110|705,5 718,18|705,50 712,48|700,62|690,92|720,70|735,95 740,100 745,112|752,125|760,138|700,130|715,150 720,160|722,180|735,188 742,190|725,195|718,165|715,215|735,215|718,240|690,236|815,145|818,165 815,180|812,170 822,185|828,200 828,212|828,238|775,245|770,262|792,68|800,62 812,64|835,62|822,72|805,115 810,122|796,132 800,125|790,155|855,72|870,68|852,92|858,105|870,88|862,115|885,80 890,92|895,105 886,110|877,125|915,20 922,5 935,2 948,8 946,18|905,32|895,48|915,55 925,62|932,72 942,88 935,98|950,82 965,70|960,92|975,65|980,85|995,88|985,110|982,130|985,155|995,175|985,182|990,200|998,215 988,240|970,215|960,200|965,190|895,235 905,240|892,220|900,250|950,255|970,270 975,290|968,285|985,292|880,290|858,288|830,262|845,280|835,285|795,285|805,280|800,292|740,280|742,290 750,298|755,283|815,305|825,318|815,325|828,335|812,345|820,350 830,342|845,350 852,345|862,358|875,365|882,352 895,355|892,340|905,335|915,350 908,362|930,345|918,332|855,330|875,338|905,370|925,395 935,410|945,385 930,385|940,370|950,362|965,355|975,352|990,355|975,365|985,375|945,400|925,408|895,405|965,380|972,395|955,445 965,450|972,425|948,440|880,20|868,5|855,15|810,5|895,5|835,30|985,240|905,190|870,180|925,225|890,265|955,300|835,300",
    specks: "715,310 722,305 728,300 800,368 805,378 650,22 656,30 690,132 718,150 1000,70 845,278 955,458",
  },
  {
    x: 1002,
    y: 735,
    borders: [
      "832,0 813,38 826,70 800,72 780,72 760,86 754,105 742,120 740,145 744,163 725,166 705,174 716,192 745,235 744,268 754,292 765,330 773,375 766,410 764,460 755,500 752,525 742,555 738,600 741,618",
      "502,0 498,30 488,62 462,95 440,128 417,160 418,205 435,242 438,270 458,292 455,308 442,322 445,350 448,380 435,430 430,455 418,490 410,530 404,575 402,620 406,655 418,680 427,693 442,738",
      "427,693 500,694 505,689 540,690 555,698 572,705 600,700 620,695 635,690 655,686 678,688 690,695 698,678 710,682 741,618 755,598 775,580 785,550 800,530 802,515 793,510 795,495 820,502 850,508 858,518 875,522 898,525 903,515 905,488 950,488 970,495 985,500 1002,520",
      "636,692 626,728 645,738",
      "0,395 18,392 28,400 40,405 43,430 55,437 80,445 100,462 118,470 130,480 155,500 175,512 198,523 202,538 215,545 215,570 213,600 210,650 225,675 248,698 250,738",
      "273,738 273,660 288,660 288,705 299,705 299,738",
    ],
    areas: [],
    strips:
      "50,142 60,150 72,160!|28,207 42,210 52,225!|95,5|105,10 125,5|160,32 175,30 183,42 185,52 176,60|178,95|192,90|198,82|215,115 228,115 222,108|220,98|243,125 243,140|246,175 246,180|250,213|265,222|258,242|228,255 236,265|248,262|107,205 118,210|125,218|130,230 140,236|148,239 162,238|182,236|198,240|30,120|40,136|12,95|5,158|5,185 8,192|20,192|45,178|70,210|78,230|40,240 52,235|30,250|45,250|10,275|20,282|68,297|82,310|92,288 100,293 107,285|133,305 148,303|180,288|192,278|186,300|205,290 212,300 205,312|222,310|228,325 232,332|175,328 190,340|172,348|154,357|210,350|222,372|230,398|242,408 250,405|254,392|58,398|72,404|82,412|95,425 102,428|112,434 125,437|155,446|180,452 188,462|200,472|0,318|5,385|5,220",
    specks: "50,0 38,258 34,130 123,212 102,274 8,268 240,380 180,446 78,404 108,4 0,376",
  },
];

const places = [
  ["清川村", 258, 459],
  ["相模原市", 1588, 179],
  ["座間市", 1706, 493],
  ["厚木市", 968, 733],
  ["海老名市", 1542, 1042],
  ["綾瀬市", 1822, 1008],
  ["秦野市", 73, 1213],
  ["伊勢原市", 584, 1252],
  ["藤沢市", 1804, 1385],
];

const toPath = list => "M" + list.trim().split(" ").join("L") + (list.trim().includes(" ") ? "" : "h.1");

const Map = () => (
  <MapCanvas viewBox="0 0 2004 1473" preserveAspectRatio="xMidYMid slice" role="img" aria-label="厚木市">
    {tiles.map(({ x, y, areas, strips, specks }) => {
      const all = strips.split("|");
      const wide = all.filter(s => s.endsWith("!")).map(s => toPath(s.slice(0, -1))).join("");
      const thin = all.filter(s => !s.endsWith("!")).map(toPath).join("");
      return (
        <g key={`${x}${y}`} transform={`translate(${x} ${y})`} fill="none" strokeLinecap="round" strokeLinejoin="round">
          <g stroke="#fdef86">
            <path d={wide} strokeWidth="19" transform="translate(-2 1)" />
            <path d={thin} strokeWidth="14" transform="translate(-2 2)" />
            {specks && <path d={specks.split(" ").map(toPath).join("")} strokeWidth="10" />}
          </g>
          {areas.map(a => (
            <path key={a} d={`${toPath(a)}Z`} fill="#ffff80" stroke="#96968a" strokeWidth="4" />
          ))}
          <path d={wide} stroke="#ffa07e" strokeWidth="14" />
          <path d={thin} stroke="#ffa07e" strokeWidth="11" />
        </g>
      );
    })}
    <path
      d="M822,60L820,48L832,43L855,52L878,70L893,76L888,94L868,92L845,72Z"
      fill="none"
      stroke="#fdef86"
      strokeWidth="6"
    />
    {tiles.map(({ x, y, borders }) => (
      <g key={`${x}${y}`} transform={`translate(${x} ${y})`} fill="none" stroke="#fa0000" strokeWidth="5.500" strokeLinejoin="round">
        {borders.map(b => (
          <path key={b} d={toPath(b)} />
        ))}
      </g>
    ))}
    <g fill="#f51c1c" fontSize="38" stroke="#fff" strokeWidth="5" paintOrder="stroke" fontFamily="Noto Sans CJK JP, sans-serif">
      {places.map(([name, x, y]) => (
        <text key={name} x={x} y={y}>
          {name}
        </text>
      ))}
    </g>
  </MapCanvas>
);

/* ---------- attribute table ---------- */

const TableFrame = styled.div`
  display: grid;
  grid-template-columns: minmax(0, 1fr) 9px;
  grid-template-rows: 130px 9px;
  gap: 1px 3px;
  height: 144px;
  padding: 2px 1px 1px 2px;
  border: 1px solid #5a5a5a;
  background: #202020;
`;
const TableClip = styled.div`
  overflow: hidden;
`;
const Table = styled.table`
  width: 100%;
  border-collapse: collapse;
  table-layout: fixed;
  font-size: 11px;
  color: #b0b0b0;
  tbody tr:nth-child(even) {
    background: #323232;
  }
`;
const Th = styled.th`
  width: ${p => (p.$w ? `${p.$w}px` : "auto")};
  height: 20px;
  padding: 0 3px;
  border-right: 1px solid #5a5a5a;
  border-bottom: 1px solid #5a5a5a;
  background: #323232;
  font-weight: 400;
`;
const HeadText = styled.span`
  display: flex;
  justify-content: center;
  overflow: hidden;
  white-space: nowrap;
`;
const RowHead = styled.th`
  padding: 0 4px;
  border: 1px solid #5a5a5a;
  border-left: 0;
  background: #323232;
  font-weight: 400;
  text-align: left;
`;
const Td = styled.td`
  height: 30px;
  padding: 0 3px;
  border-right: 1px solid #181818;
  border-bottom: 1px solid #181818;
  overflow: hidden;
  font-size: ${p => (p.$cjk ? 12 : 11)}px;
  text-align: ${p => (p.$num ? "right" : "left")};
  white-space: nowrap;
`;
const VScroll = styled.div`
  border: 1px solid #5a5a5a;
  background: linear-gradient(#2c2c2c 15px, #5a5a5a 15px);
`;
const HScroll = styled.div`
  border: 1px solid #5a5a5a;
  background: linear-gradient(90deg, #2c2c2c 55%, #5a5a5a 55%);
`;

const columns = [
  ["", 38],
  ["gml_id", 100],
  ["creationDate", 100],
  ["validFrom", 80],
  ["dFromT", 42],
  ["prefecture", 55],
  ["etrySrc", 43],
  ["naticSrc", 46],
  ["nceSrcD", 46],
  ["location", 100],
  ["", 0],
];
const records = [
  ["urf_2f52ebc9-e...", "厚木市七沢"],
  ["urf_a602c87b-1...", "厚木市上荻野"],
  ["urf_a8622250-c...", "厚木市上荻野"],
  ["urf_7088d506-6...", "厚木市上荻野"],
];

const TableFooter = styled.div`
  display: flex;
  align-items: center;
  height: 32px;
  padding: 3px 1px 0 1px;
`;
const FilterButton = styled.button`
  display: flex;
  align-items: center;
  gap: 3px;
  height: 24px;
  margin-right: auto;
  padding: 0 3px 0 5px;
  border: 1px solid #202020;
  background: #545454;
  color: #c4c4c4;
  font-size: 11px;
  white-space: nowrap;
`;
const FilterCaret = styled(Caret)`
  align-self: flex-end;
  margin: 0 0 4px 3px;
`;

/* ---------- toolbox ---------- */

const Field = styled.label`
  display: flex;
  align-items: center;
  gap: ${p => p.$gap || 6}px;
  height: 22px;
  padding: 0 7px;
  border: 1px solid #5a5a5a;
  background: #202020;
`;
const Input = styled.input`
  flex: 1;
  min-width: 0;
  width: 100%;
  padding: 0;
  border: 0;
  outline: 0;
  background: none;
  color: #dedede;
  &::placeholder {
    color: #666;
  }
`;
const ClearButton = styled.button`
  display: block;
  padding: 0;
  border: 0;
  background: none;
`;
const ToolRow = styled.div`
  display: flex;
  align-items: center;
  gap: 3px;
  height: 18px;
  margin-right: 2px;
  padding-left: ${p => p.$level * 20}px;
  background: ${p => (p.$selected ? "#107500" : "none")};
  color: #dedede;
`;
const ToolName = styled.span`
  padding-left: 3px;
`;
const CodeRow = styled.label`
  display: flex;
  align-items: center;
  gap: 8px;
  height: ${p => (p.$tall ? 22 : 20)}px;
  margin: ${p => (p.$tall ? "4px 0 7px" : 0)};
  padding: 0 9px 0 12px;
  font-size: 11px;
  white-space: nowrap;
`;
const CodeField = styled(Input)`
  height: 22px;
  padding: 0 5px;
  border: 1px solid #5a5a5a;
  background: #202020;
  font-family: "Liberation Sans", sans-serif;
`;

/* ---------- status bar ---------- */

const StatusBar = styled.footer`
  display: flex;
  align-items: center;
  gap: 6px;
  height: 32px;
  padding: 0 16px 0 4px;
  font-family: "Liberation Sans", "Noto Sans CJK JP", sans-serif;
  font-size: 11px;
  color: #c0c0c0;
`;
const Search = styled(Field)`
  width: 200px;
  margin-right: auto;
`;
const StatusLabel = styled.label`
  padding: 0 ${p => (p.$wide ? 5 : 0)}px 0 ${p => (p.$gap ? 4 : 0)}px;
  white-space: nowrap;
`;
const Box = styled.span`
  display: flex;
  width: ${p => p.$w}px;
  height: 22px;
  padding: 2px 2px 2px 5px;
  border: 1px solid #5a5a5a;
  background: #202020;
`;
const Select = styled.select`
  flex: 1;
  min-width: 0;
  padding: 0;
  border: 0;
  appearance: none;
  background: none;
  color: #dedede;
`;
const DropButton = styled.span`
  display: grid;
  place-items: center;
  width: 14px;
  background: #4c4c4c;
`;
const Spin = styled.span`
  display: grid;
  align-content: space-evenly;
  justify-content: center;
  width: 14px;
  background: #4c4c4c;
`;
const CaretUp = styled(Caret)`
  transform: rotate(180deg);
`;
const CheckLabel = styled.label`
  display: flex;
  align-items: center;
  gap: 7px;
  font-size: 10px;
`;
const CheckBox = styled.input`
  display: grid;
  place-items: center;
  width: 15px;
  height: 15px;
  margin: 0;
  appearance: none;
  border: 1px solid #0c9c2c;
  background: #101010;
  &:checked::before {
    content: "";
    width: 4px;
    height: 8px;
    border: solid #fff;
    border-width: 0 2px 2px 0;
    transform: rotate(40deg);
  }
`;
const Crs = styled.button`
  display: flex;
  align-items: center;
  gap: 2px;
  margin: 0 16px 0 5px;
  padding: 0;
  border: 0;
  background: none;
  font-size: 10px;
`;

const App = () => (
  <>
    <GlobalStyle />
    <Window>
      <TitleBar>
        <Icon name="qgis" />
        <WindowTitle>*土砂災害 — QGIS</WindowTitle>
        <WindowButtons>
          <WindowButton aria-label="minimize">
            <svg width="10" height="10" stroke="#888"><path d="M0 5.500h10" /></svg>
          </WindowButton>
          <WindowButton aria-label="maximize">
            <svg width="10" height="10" stroke="#888" fill="none"><rect x=".5" y=".5" width="9" height="9" rx="1" /></svg>
          </WindowButton>
          <WindowButton aria-label="close">
            <svg width="10" height="10" stroke="#888"><path d="M0 0l10 10M10 0L0 10" /></svg>
          </WindowButton>
        </WindowButtons>
      </TitleBar>
      <MenuBar>
        {menus.map(([name, key]) => (
          <MenuButton key={key}>
            {name}(<u>{key}</u>)
          </MenuButton>
        ))}
      </MenuBar>
      <Tools items={mainTools} after={5} />
      <Tools items={editTools} />
      <Workspace>
        <Dock>
          <Title>レイヤ</Title>
          <Tools small inset={2} after={3} items="brush groupAdd eyeMenu funnelMenu exprFilterv expand collapse remove" />
          <Well>
            {layers.map((layer, i) => (
              <LayerRow key={i} layer={layer} />
            ))}
            <Scroll />
          </Well>
          <Tabs $height={21}>
            <Tab $active $pad={13}>レイヤ</Tab>
            <Tab $pad={12}>ブラウザ</Tab>
          </Tabs>
        </Dock>
        <Dock>
          <Map />
          <Title height={28} top={8}>
            urf — SedimentDisasterProneArea — 地物数合計: 1492, フィルタ: 1492, 選択: 0
          </Title>
          <Tools small after={5} items={tableTools} />
          <TableFrame>
            <TableClip>
              <Table>
                <thead>
                  <tr>
                    {columns.map(([name, w], i) => (
                      <Th key={i} $w={w}>
                        <HeadText>{name}</HeadText>
                      </Th>
                    ))}
                  </tr>
                </thead>
                <tbody>
                  {records.map(([id, location], i) => (
                    <tr key={id}>
                      <RowHead>{i + 1}</RowHead>
                      <Td>{id}</Td>
                      <Td>2024-03-29</Td>
                      <Td>2008-11-21</Td>
                      <Td $num>1</Td>
                      <Td $num>14</Td>
                      <Td $num>400</Td>
                      <Td $num>400</Td>
                      <Td $num>99</Td>
                      <Td $cjk>{location}</Td>
                      <Td />
                    </tr>
                  ))}
                </tbody>
              </Table>
            </TableClip>
            <VScroll />
            <HScroll />
          </TableFrame>
          <TableFooter>
            <FilterButton>
              <Icon name="sheet" size={14} />
              すべての地物を表示
              <FilterCaret />
            </FilterButton>
            <ToolButton $small aria-label="form view">
              <Icon name="form" size={14} />
            </ToolButton>
            <ToolButton $small $on aria-label="table view">
              <Icon name="sheet" size={14} />
            </ToolButton>
          </TableFooter>
        </Dock>
        <Dock>
          <Title>プロセシングツールボックス</Title>
          <Tools small inset={2} after={3} items="gears pythonMenu clock doc : note : wrench" />
          <Field $gap={9}>
            <Icon name="search" size={13} />
            <Input aria-label="検索" defaultValue="属性の空間結合" />
            <ClearButton aria-label="clear">
              <svg width="13" height="10" viewBox="0 0 13 10">
                <path d="M0 5l4-5h9v10H4z" fill="#bbb" />
                <path d="M5 2l5 6M10 2L5 8" stroke="#333" />
              </svg>
            </ClearButton>
          </Field>
          <Well>
            <ToolRow $level={0}>
              <Twist $state="shut" />
              <Icon name="clock" />
              <ToolName>最近使ったツール</ToolName>
            </ToolRow>
            <ToolRow $level={0}>
              <Twist $state="open" />
              <Icon name="qgis" />
              <ToolName>ベクタ一般</ToolName>
            </ToolRow>
            <ToolRow $level={1} $selected>
              <Twist />
              <Icon name="gear" />
              <ToolName>属性の空間結合</ToolName>
            </ToolRow>
            <ToolRow $level={1}>
              <Twist />
              <Icon name="smallSigma" />
              <ToolName>属性の空間結合（集計つき）</ToolName>
            </ToolRow>
          </Well>
          <Tabs $height={22}>
            <Tab $pad={16}>地物情報結果</Tab>
            <Tab $active $pad={8}>プロセシングツールボックス</Tab>
          </Tabs>
          <Title height={30}>地域メッシュコード</Title>
          <CodeRow as="div">緯度: 35.42253° , 経度: 139.42562°</CodeRow>
          <CodeRow $tall>
            コード:
            <CodeField defaultValue="5339-1304-3-1-3" />
          </CodeRow>
        </Dock>
      </Workspace>
      <StatusBar>
        <Search $gap={9}>
          <Icon name="search" size={13} />
          <Input aria-label="検索" placeholder="検索(Ctrl + K)" />
        </Search>
        <StatusLabel htmlFor="coord">座標</StatusLabel>
        <Box $w={92}>
          <Input id="coord" defaultValue="-63990, -37023" />
        </Box>
        <Icon name="track" />
        <StatusLabel $gap htmlFor="scale">縮尺</StatusLabel>
        <Box $w={74}>
          <Select id="scale">
            <option>1:114327</option>
          </Select>
          <DropButton><Caret /></DropButton>
        </Box>
        <Icon name="lock" />
        <StatusLabel $gap htmlFor="zoom">拡大</StatusLabel>
        <Box $w={83}>
          <Input id="zoom" defaultValue="100%" />
          <Spin><CaretUp /><Caret /></Spin>
        </Box>
        <StatusLabel $gap $wide htmlFor="turn">回転</StatusLabel>
        <Box $w={83}>
          <Input id="turn" defaultValue="0.0°" />
          <Spin><CaretUp /><Caret /></Spin>
        </Box>
        <CheckLabel>
          <CheckBox type="checkbox" defaultChecked />
          レンダ
        </CheckLabel>
        <Crs>
          <Icon name="globe" size={14} />
          EPSG:6677
        </Crs>
        <Icon name="bubble" />
      </StatusBar>
    </Window>
  </>
);

export default App;
